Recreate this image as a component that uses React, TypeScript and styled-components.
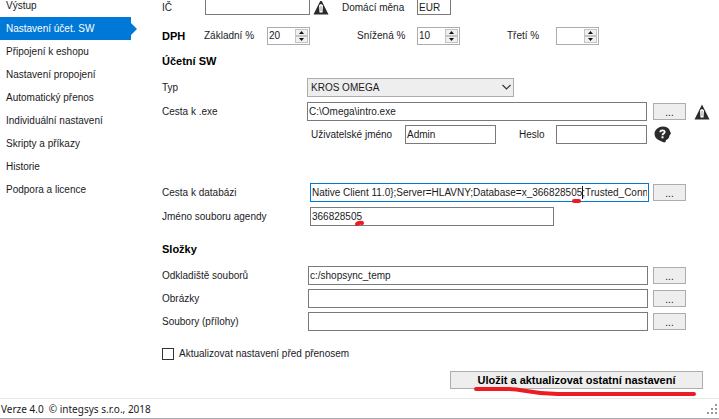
import React from "react";
import styled, { createGlobalStyle, css } from "styled-components";

const GlobalStyle = createGlobalStyle`
  * { box-sizing: border-box; }
  html, body, #root { height: 100%; }
  body {
    margin: 0;
    background: #fff;
    color: #1a1a1e;
    font: 10px/14px "Liberation Sans", Arial, sans-serif;
    overflow: hidden;
  }
  input, button, select { font: inherit; color: inherit; margin: 0; border-radius: 0; }
`;

const Window = styled.div`
  display: flex;
  flex-direction: column;
  min-height: 100%;
`;

const Content = styled.div`
  display: flex;
  flex: 1;
`;

const Sidebar = styled.nav`
  display: flex;
  flex-direction: column;
  flex: 0 0 131px;
`;

const NavItem = styled.a<{ $active?: boolean; $cut?: boolean }>`
  position: relative;
  padding-left: 6px;
  height: ${(p) => (p.$cut ? 17 : 23)}px;
  line-height: ${(p) => (p.$cut ? 12 : 23)}px;
  color: ${(p) => (p.$active ? "#fff" : "inherit")};
  background: ${(p) => (p.$active ? "#0078d7" : "transparent")};
  text-decoration: none;
  white-space: nowrap;
  ${(p) =>
    p.$active &&
    css`
      &::after {
        content: "";
        position: absolute;
        left: 100%;
        top: 6px;
        border: 6px solid transparent;
        border-left-color: #0078d7;
        border-right-width: 0;
      }
    `}
`;

const Form = styled.form`
  display: flex;
  flex-direction: column;
  flex: 1;
  min-width: 0;
  padding: 0 33px 9px 31px;
`;

const Row = styled.div<{ $top?: number; $cols: string }>`
  display: grid;
  grid-template-columns: ${(p) => p.$cols};
  align-items: center;
  margin-top: ${(p) => p.$top ?? 0}px;
`;

const ExeRow = styled(Row)`
  margin-right: -24px;
`;

const LoginRow = styled(Row)`
  margin-left: 149px;
`;

const Heading = styled.h2<{ $top?: number }>`
  margin: ${(p) => p.$top ?? 0}px 0 0;
  font-size: 11px;
  line-height: 16px;
  font-weight: 700;
  color: #000;
`;

const Label = styled.label`
  white-space: nowrap;
`;

const Field = styled.div`
  position: relative;
  display: flex;
  min-width: 0;
`;

const TextBox = styled.input<{ $focused?: boolean; $cut?: boolean }>`
  flex: 1;
  min-width: 0;
  width: 100%;
  height: ${(p) => (p.$cut ? 15 : 19)}px;
  padding: 0 1px;
  border: 1px solid ${(p) => (p.$focused ? "#0078d7" : "#7a7a7a")};
  ${(p) => p.$cut && "border-top: 0;"}
  background: #fff;
  outline: none;
`;

const Spinner = styled.div`
  display: flex;
  width: 43px;
  height: 18px;
  border: 1px solid #abadb3;
  padding: 1px 1px 1px 0;
`;

const SpinnerInput = styled.input`
  flex: 1;
  min-width: 0;
  padding: 0 0 0 1px;
  border: 0;
  outline: none;
  background: transparent;
`;

const Steps = styled.div`
  display: grid;
  grid-template-rows: 1fr 1fr;
  width: 13px;
`;

const Step = styled.button`
  display: flex;
  align-items: center;
  justify-content: center;
  min-height: 0;
  padding: 0;
  border: 1px solid #c4c4c4;
  background: #f0f0f0;
`;

const SelectBox = styled.div`
  position: relative;
  width: 207px;
`;

const Select = styled.select`
  display: block;
  width: 100%;
  height: 19px;
  padding: 0 20px 0 3px;
  border: 1px solid #adadad;
  background: #eee;
  appearance: none;
  outline: none;
`;

const Chevron = styled.svg`
  position: absolute;
  right: 3px;
  top: 6px;
  pointer-events: none;
`;

const Browse = styled.button`
  height: 17px;
  padding: 2px 0 0;
  border: 1px solid #adadad;
  background: #eee;
  line-height: 13px;
`;

const Check = styled.label`
  display: flex;
  align-items: center;
  gap: 5px;
  margin-top: 17px;
  line-height: 12px;
`;

const CheckInput = styled.input`
  appearance: none;
  width: 12px;
  height: 12px;
  border: 1px solid #333;
  background: #fff;
`;

const Actions = styled.div`
  position: relative;
  display: flex;
  align-self: flex-end;
  margin: 11px -17px 0 0;
`;

const Save = styled.button`
  width: 253px;
  height: 18px;
  padding: 0;
  border: 1px solid #adadad;
  background: #eee;
  font-size: 11px;
  font-weight: 700;
  color: #000;
`;

const Overlay = styled.svg<{ $x: number; $y: number }>`
  position: absolute;
  left: ${(p) => p.$x}px;
  top: ${(p) => p.$y}px;
  pointer-events: none;
  overflow: visible;
`;

const StatusBar = styled.footer`
  display: flex;
  justify-content: space-between;
  align-items: center;
  height: 21px;
  padding: 0 2px 0 1px;
  border-top: 1px solid #e6e6e6;
  border-bottom: 1px solid #a8aaad;
  font-family: "Noto Sans", "Open Sans", sans-serif;
  white-space: pre;
`;

const WarningCell = styled.div`
  display: flex;
  align-items: flex-end;
  height: 14px;
  padding-left: 3px;
  overflow: hidden;
`;

const Icon = styled.svg`
  display: block;
  flex: none;
`;

const Warning = () => (
  <Icon width="16" height="16" viewBox="0 0 16 16" aria-label="Upozornění">
    <path d="M8 .5 15.5 15.5H.5Z" fill="#2b2b2b" />
    <path d="M6 6.500Q8 3.500 10 6.500L9.500 13.500H6.500Z" fill="#fff" />
    <path d="M8 7V12" stroke="#999" />
  </Icon>
);

const Help = () => (
  <Icon width="17" height="17" viewBox="0 0 17 17" aria-label="Nápověda">
    <path d="M8.5.5C12.500.5 14.500 2 15.500 4L17 7.500 15.500 9.500C15 12.500 13.500 13.500 12 14L11.500 16 10 16.500 6 14.800C2.500 13.600.5 11 .5 7.800S4 .5 8.500.5Z" fill="#2b2b2b" />
    <path d="M6.300 6.200C6.300 3.900 10.700 3.700 10.700 6 10.700 7.600 8.500 7.600 8.500 9.200" fill="none" stroke="#fff" strokeWidth="1.800" />
    <rect x="7.500" y="10.300" width="2" height="2" fill="#fff" />
  </Icon>
);

const NumberBox = ({ id, value }: { id: string; value: string }) => (
  <Spinner>
    <SpinnerInput id={id} defaultValue={value} />
    <Steps>
      <Step type="button" aria-label="Zvýšit">
        <svg width="5" height="3" viewBox="0 0 5 3"><path d="M0 3 2.500 0 5 3Z" fill="#111" /></svg>
      </Step>
      <Step type="button" aria-label="Snížit">
        <svg width="5" height="3" viewBox="0 0 5 3"><path d="M0 0H5L2.500 3Z" fill="#111" /></svg>
      </Step>
    </Steps>
  </Spinner>
);

const pathCols = "146px minmax(0, 1fr) 5px 33px";

const PathRow = ({ id, label, value, top }: { id: string; label: string; value: string; top?: number }) => (
  <Row $cols={pathCols} $top={top}>
    <Label htmlFor={id}>{label}</Label>
    <TextBox id={id} defaultValue={value} />
    <span />
    <Browse type="button" aria-label={`${label}: procházet`}>...</Browse>
  </Row>
);

const navItems = [
  "Výstup",
  "Nastavení účet. SW",
  "Připojení k eshopu",
  "Nastavení propojení",
  "Automatický přenos",
  "Individuální nastavení",
  "Skripty a příkazy",
  "Historie",
  "Podpora a licence",
];

export default function App() {
  return (
    <>
      <GlobalStyle />
      <Window>
        <Content>
          <Sidebar>
            {navItems.map((item, i) => (
              <NavItem key={item} href="#" $cut={i === 0} $active={i === 1}>{item}</NavItem>
            ))}
          </Sidebar>
          <Form>
            <Row $cols="43px 105px 32px 75px 34px">
              <Label htmlFor="ic">IČ</Label>
              <TextBox id="ic" $cut />
              <WarningCell><Warning /></WarningCell>
              <Label htmlFor="currency">Domácí měna</Label>
              <TextBox id="currency" defaultValue="EUR" $cut />
            </Row>
            <Row $cols="42px 63px 90px 60px 90px 49px 43px" $top={12}>
              <Heading>DPH</Heading>
              <Label htmlFor="vat1">Základní %</Label>
              <NumberBox id="vat1" value="20" />
              <Label htmlFor="vat2">Snížená %</Label>
              <NumberBox id="vat2" value="10" />
              <Label htmlFor="vat3">Třetí %</Label>
              <NumberBox id="vat3" value="" />
            </Row>
            <Heading $top={8}>Účetní SW</Heading>
            <Row $cols="145px 1fr" $top={9}>
              <Label htmlFor="type">Typ</Label>
              <SelectBox>
                <Select id="type"><option>KROS OMEGA</option></Select>
                <Chevron width="9" height="7" viewBox="0 0 9 7">
                  <path d="M.5 1 4.500 5 8.500 1" fill="none" stroke="#333" strokeWidth="1.200" />
                </Chevron>
              </SelectBox>
            </Row>
            <ExeRow $cols="145px minmax(0, 1fr) 6px 33px 8px 16px" $top={5}>
              <Label htmlFor="exe">Cesta k .exe</Label>
              <TextBox id="exe" defaultValue="C:\Omega\intro.exe" />
              <span />
              <Browse type="button" aria-label="Cesta k .exe: procházet">...</Browse>
              <span />
              <Warning />
            </ExeRow>
            <LoginRow $cols="94px 91px 23px 37px minmax(0, 1fr) 7px 32px" $top={4}>
              <Label htmlFor="user">Uživatelské jméno</Label>
              <TextBox id="user" defaultValue="Admin" />
              <span />
              <Label htmlFor="pass">Heslo</Label>
              <TextBox id="pass" />
              <span />
              <Help />
            </LoginRow>
            <Row $cols="148px minmax(0, 1fr) 4px 33px" $top={39}>
              <Label htmlFor="db">Cesta k databázi</Label>
              <Field>
                <TextBox
                  id="db"
                  $focused
                  defaultValue="Native Client 11.0};Server=HLAVNY;Database=x_366828505;Trusted_Connection=yes;"
                />
                <Overlay $x={263} $y={2} width="10" height="17" viewBox="0 0 10 17">
                  <path d="M9.500 1V14" stroke="#111" />
                  <path d="M1 16H6" stroke="#ed1c24" strokeWidth="4" strokeLinecap="round" />
                </Overlay>
              </Field>
              <span />
              <Browse type="button" aria-label="Cesta k databázi: procházet">...</Browse>
            </Row>
            <Row $cols="148px 244px" $top={5}>
              <Label htmlFor="agenda">Jméno souboru agendy</Label>
              <Field>
                <TextBox id="agenda" defaultValue="366828505" />
                <Overlay $x={45} $y={13} width="10" height="6" viewBox="0 0 10 6">
                  <path d="M2 4Q4 2 7 3" fill="none" stroke="#ed1c24" strokeWidth="4" strokeLinecap="round" />
                </Overlay>
              </Field>
            </Row>
            <Heading $top={15}>Složky</Heading>
            <PathRow id="store" label="Odkladiště souborů" value="c:/shopsync_temp" top={9} />
            <PathRow id="images" label="Obrázky" value="" top={4} />
            <PathRow id="files" label="Soubory (přílohy)" value="" top={4} />
            <Check>
              <CheckInput type="checkbox" />
              Aktualizovat nastavení před přenosem
            </Check>
            <Actions>
              <Save type="button">Uložit a aktualizovat ostatní nastavení</Save>
              <Overlay $x={23} $y={16} width="224" height="10" viewBox="0 0 224 10">
                <path d="M3 2H36C52 2 60 8 90 7H221" fill="none" stroke="#ed1c24" strokeWidth="4" strokeLinecap="round" />
              </Overlay>
            </Actions>
          </Form>
        </Content>
        <StatusBar>
          <span>{"Verze 4.0  © integsys s.r.o., 2018"}</span>
          <svg width="10" height="10" viewBox="0 0 10 10" fill="#999">
            <path d="M8 0h2v2H8zM4 4h2v2H4zM8 4h2v2H8zM0 8h2v2H0zM4 8h2v2H4zM8 8h2v2H8z" />
          </svg>
        </StatusBar>
      </Window>
    </>
  );
}
